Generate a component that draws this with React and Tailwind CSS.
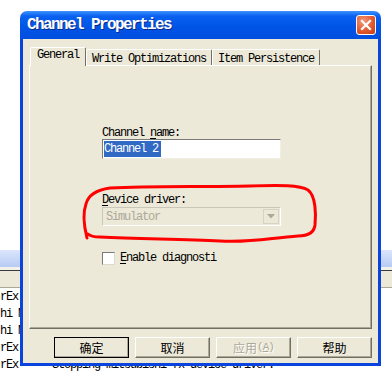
import React from 'react';

const bgRows = [
  { left: 'rEx', msg: '' },
  { left: 'hi M', msg: '' },
  { left: 'hi M', msg: '' },
  { left: 'rEx', msg: '' },
  { left: 'rEx', msg: 'Stopping mitsubishi fx device driver.' },
];

function Tab({ label, active }) {
  if (active) {
    return (
      <div className="relative z-10 -mb-px h-[19px] rounded-tl-[2px] rounded-tr-[2px] border-l border-r border-t border-l-white border-r-[#716f64] border-t-white bg-[#ece9d8] px-[6px] pt-[1px] leading-[13px]">
        {label}
      </div>
    );
  }
  return (
    <div className="h-[16px] rounded-tl-[2px] rounded-tr-[2px] border-l border-r border-t border-l-white border-r-[#716f64] border-t-white px-[5px] pt-[3px] leading-[13px]">
      {label}
    </div>
  );
}

function Button({ children, isDefault, disabled }) {
  const frame = isDefault
    ? 'border border-black'
    : 'border border-l-white border-t-white border-r-[#716f64] border-b-[#716f64]';
  return (
    <button
      type="button"
      className={`${frame} flex h-[21px] w-[75px] items-center justify-center bg-[#ece9d8] font-['Noto_Sans_CJK_SC',sans-serif] text-[12px] leading-none tracking-normal shadow-[inset_-1px_-1px_0_#aca899] ${
        disabled ? 'text-[#aca899] [text-shadow:1px_1px_0_#ffffff]' : 'text-black'
      }`}
    >
      {children}
    </button>
  );
}

export default function App() {
  return (
    <div className="relative h-[377px] w-[392px] overflow-hidden bg-white font-mono font-['Liberation_Mono',monospace] text-[12px] tracking-[-1.2px] text-black">
      {/* application behind the dialog */}
      <div className="h-[250px]" />
      <div className="h-[17px] bg-gradient-to-b from-[#dbe5fc] to-[#b8cbf4]" />
      <div className="h-[3px] bg-[#f3f1e8]" />
      <div className="h-[1px] bg-[#3a3a3a]" />
      <div className="h-[17px] border-b border-[#aca899] bg-[#ece9d8]" />
      <div className="pt-[1px]">
        {bgRows.map((row, i) => (
          <div key={i} className="flex h-[17px] items-center leading-[17px]">
            <span className="w-[52px] shrink-0 whitespace-nowrap">{row.left}</span>
            <span className="whitespace-nowrap">{row.msg}</span>
          </div>
        ))}
      </div>

      {/* dialog window */}
      <div className="absolute left-[20px] top-[11px] flex h-[355px] w-[361px] flex-col overflow-hidden rounded-t-[7px]">
        <div className="flex h-[28px] shrink-0 items-center justify-between bg-[linear-gradient(180deg,#3f93fd_0%,#0a61f0_18%,#0055e6_55%,#004ee0_100%)] pl-[7px] pr-[5px]">
          <span className="text-[16px] font-bold tracking-[-1.6px] text-white [text-shadow:1px_1px_0_#0a2a8a]">
            Channel Properties
          </span>
          <div className="flex h-[20px] w-[20px] items-center justify-center rounded-[3px] border border-white bg-[radial-gradient(circle_at_35%_30%,#f29a7c_0%,#e2592f_55%,#c63d16_100%)]">
            <svg width="12" height="12" viewBox="0 0 12 12">
              <path d="M2 2 L10 10 M10 2 L2 10" stroke="#ffffff" strokeWidth="2.2" strokeLinecap="square" />
            </svg>
          </div>
        </div>

        <div className="flex flex-1 flex-col border-b-[3px] border-l-[3px] border-r-[3px] border-[#0a44dc] bg-[#ece9d8] px-[6px] pt-[8px] pb-[5px]">
          <div className="flex h-[18px] items-end pl-[1px]">
            <Tab label="General" active />
            <Tab label="Write Optimizations" />
            <Tab label="Item Persistence" />
          </div>

          <div className="flex h-[264px] flex-col border-b border-l border-r border-t border-b-[#716f64] border-l-white border-r-[#716f64] border-t-white pl-[72px] shadow-[inset_-1px_-1px_0_#aca899]">
            <div className="mt-[61px] h-[12px] leading-[12px]">
              Channel <span className="underline underline-offset-2">n</span>ame:
            </div>
            <div className="flex h-[20px] w-[179px] items-center border border-b-[#f1efe2] border-l-[#7a7a7a] border-r-[#f1efe2] border-t-[#7a7a7a] bg-white pl-[1px]">
              <span className="bg-[#316ac5] pr-[3px] leading-[16px] text-white">Channel 2</span>
            </div>

            <div className="mt-[35px] h-[12px] leading-[12px]">
              <span className="underline underline-offset-2">D</span>evice driver:
            </div>
            <div className="mt-[1px] flex h-[19px] w-[179px] items-center justify-between border border-b-white border-l-[#c9c7ba] border-r-white border-t-[#c9c7ba] bg-[#ece9d8] pl-[3px] pr-[1px]">
              <span className="text-[#aca899]">Simulator</span>
              <div className="flex h-[15px] w-[16px] items-center justify-center border border-[#d6d3c6] bg-[#ece9d8]">
                <svg width="8" height="5" viewBox="0 0 8 5">
                  <path d="M0 0 H8 L4 4.5 Z" fill="#aca899" />
                </svg>
              </div>
            </div>

            <div className="mt-[26px] flex h-[13px] items-center gap-[5px]">
              <div className="h-[13px] w-[13px] border border-b-[#dcdad0] border-l-[#7a7a7a] border-r-[#dcdad0] border-t-[#7a7a7a] bg-white" />
              <span className="leading-[13px]">
                <span className="underline underline-offset-2">E</span>nable diagnosti
              </span>
            </div>
          </div>

          <div className="mt-[8px] flex justify-end gap-[6px]">
            <Button isDefault>确定</Button>
            <Button>取消</Button>
            <Button disabled>
              应用<span className="font-['Liberation_Mono',monospace] text-[11px] tracking-[-1px]">(<span className="underline">A</span>)</span>
            </Button>
            <Button>帮助</Button>
          </div>
        </div>
      </div>

      {/* red annotation */}
      <svg className="pointer-events-none absolute left-0 top-0" width="392" height="377" viewBox="0 0 392 377">
        <path
          d="M87 238 C84 226, 83 212, 86 204 C88 196, 96 190, 110 188 C150 186, 200 187, 250 186 C280 185, 300 185, 308 190 C316 196, 316 215, 315 225 C314 233, 308 236, 298 236 C270 238, 250 243, 220 241 C180 239, 140 239, 100 237 C95 237, 90 236, 88 234"
          fill="none"
          stroke="#ff0000"
          strokeWidth="3"
          strokeLinecap="round"
          strokeLinejoin="round"
        />
      </svg>
    </div>
  );
}
